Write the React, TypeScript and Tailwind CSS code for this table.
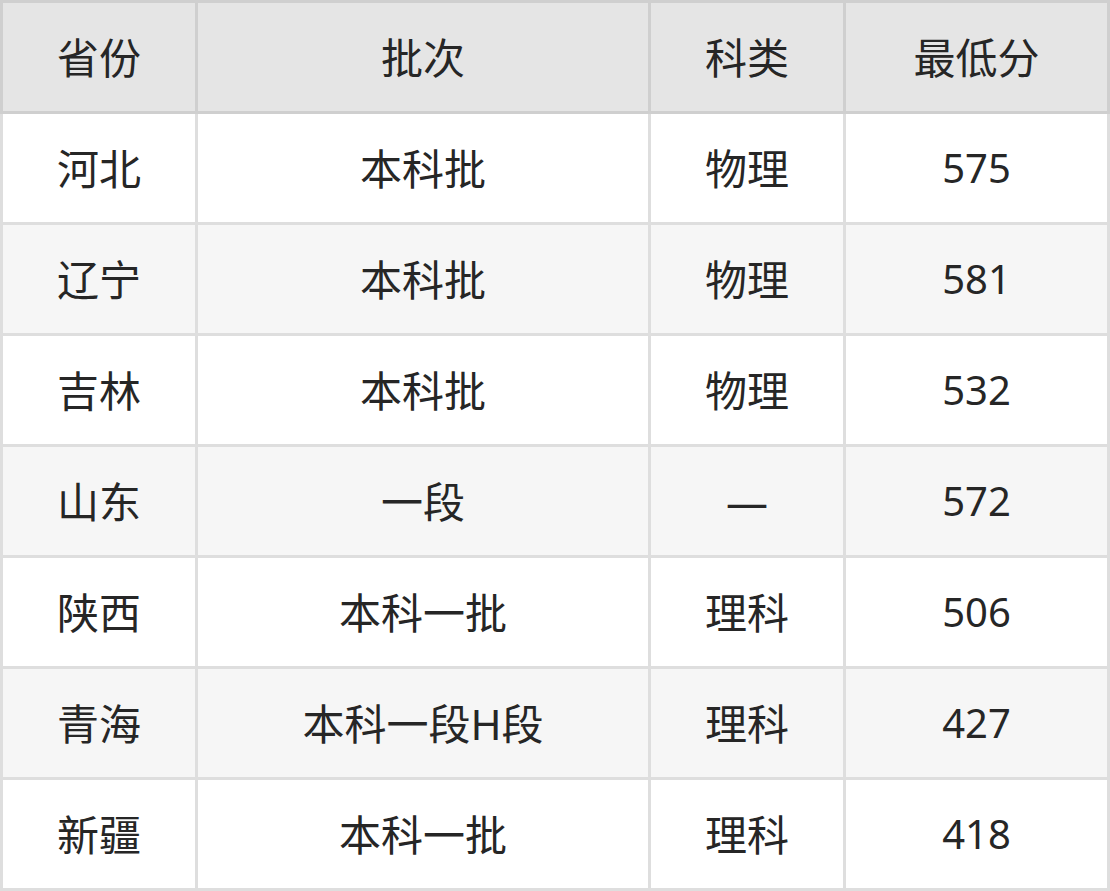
const rows = [
  ["河北", "本科批", "物理", "575"],
  ["辽宁", "本科批", "物理", "581"],
  ["吉林", "本科批", "物理", "532"],
  ["山东", "一段", "—", "572"],
  ["陕西", "本科一批", "理科", "506"],
  ["青海", "本科一段H段", "理科", "427"],
  ["新疆", "本科一批", "理科", "418"],
];

const headers = ["省份", "批次", "科类", "最低分"];

export default function App() {
  return (
    <div className="w-[1110px] bg-white">
      <table
        className="w-[1110px] table-fixed border-collapse text-center text-[42px] text-[#262626]"
        style={{ fontFamily: '"Noto Sans", "Noto Sans CJK SC", sans-serif' }}
      >
        <colgroup>
          <col className="w-[195px]" />
          <col className="w-[453px]" />
          <col className="w-[195px]" />
          <col />
        </colgroup>
        <thead>
          <tr className="h-[111px] bg-[#e5e5e5]">
            {headers.map((h) => (
              <th key={h} className="border-[3px] border-[#cfcfcf] p-0 font-normal">
                {h}
              </th>
            ))}
          </tr>
        </thead>
        <tbody>
          {rows.map((row, i) => (
            <tr key={i} className={`h-[111px] ${i % 2 === 1 ? "bg-[#f6f6f6]" : "bg-white"}`}>
              {row.map((cell, j) => (
                <td
                  key={j}
                  className={`border-[3px] border-[#dedede] p-0 ${j === 3 ? "text-[40px]" : ""}`}
                >
                  {cell}
                </td>
              ))}
            </tr>
          ))}
        </tbody>
      </table>
    </div>
  );
}
